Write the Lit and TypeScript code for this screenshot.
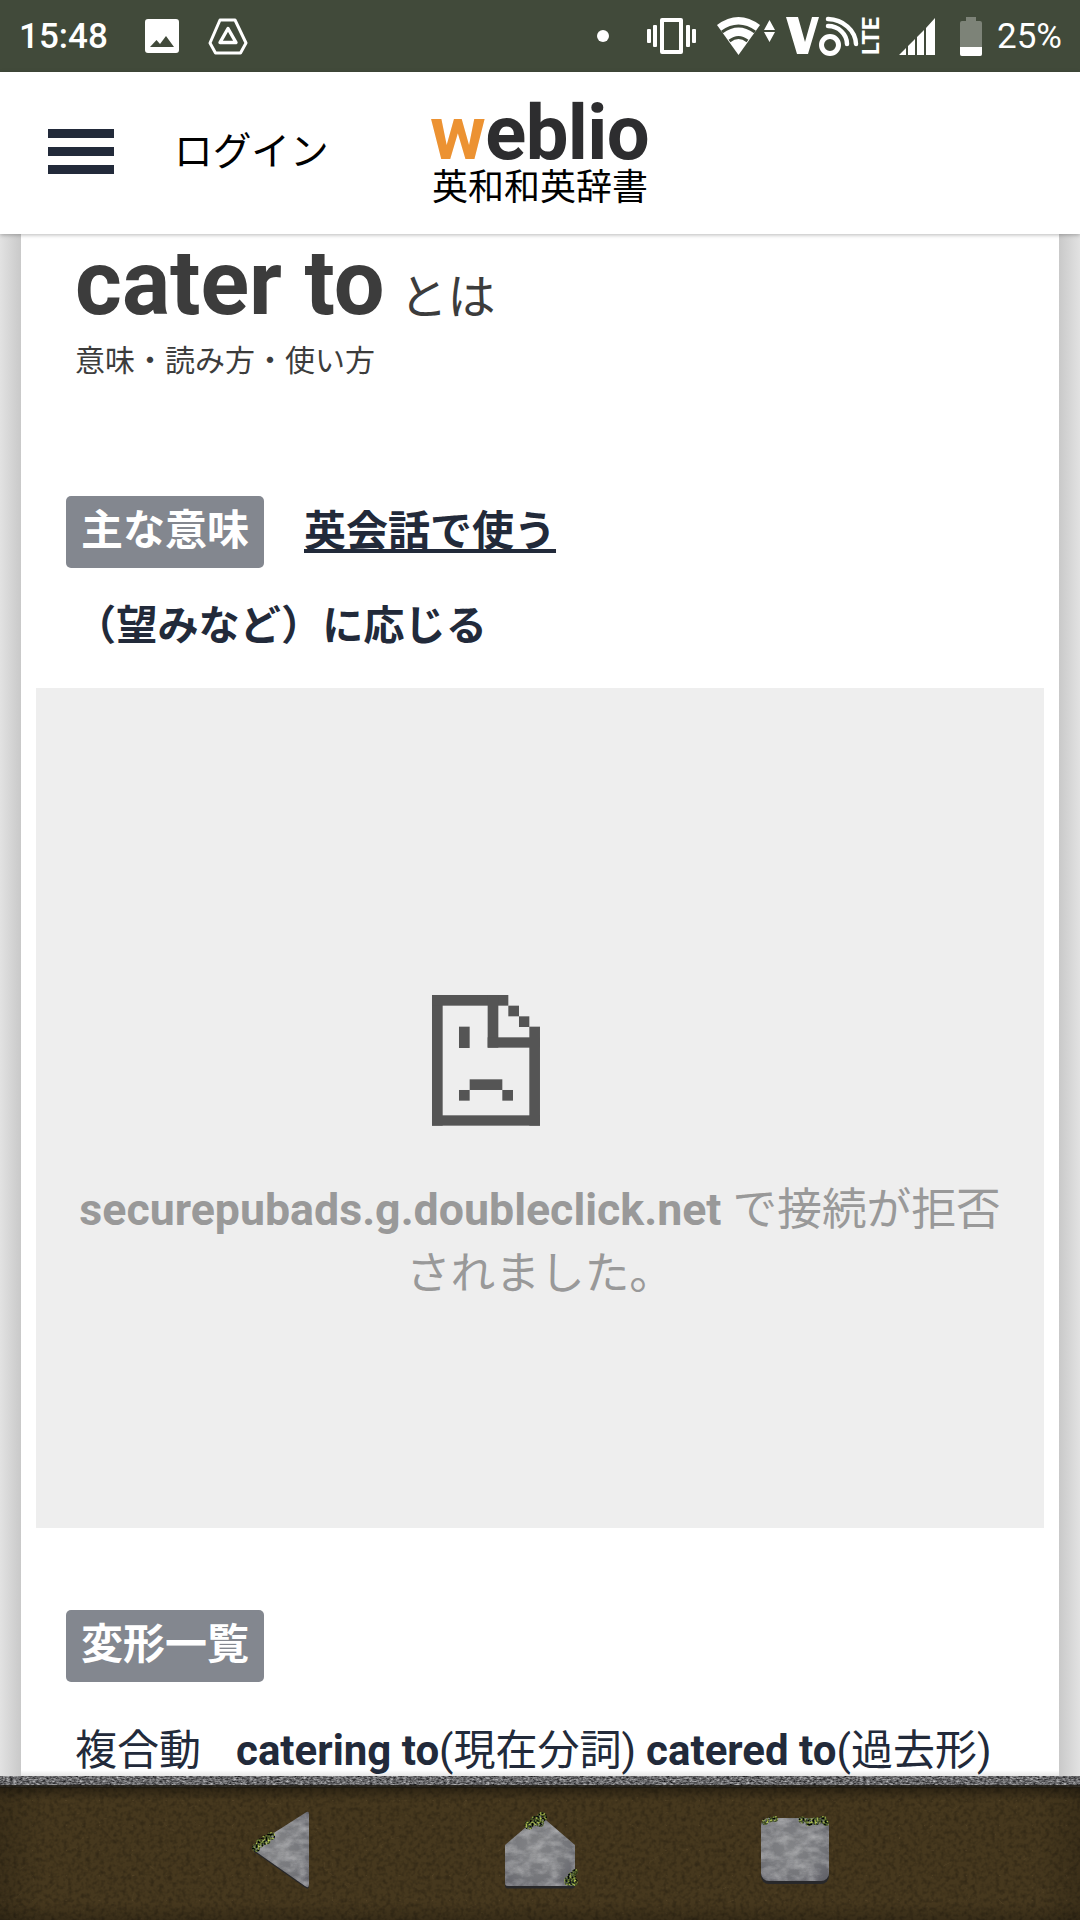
import { LitElement, html, css, svg } from "lit";
import { customElement } from "lit/decorators.js";

const moss = (pts: [number, number, number][]) =>
  pts.map(([x, y, r]) => svg`<circle cx=${x} cy=${y} r=${r} fill="#000" filter="url(#mossN)"/>`);

@customElement("app-root")
export class AppRoot extends LitElement {
  static styles = css`
    :host {
      display: flex;
      flex-direction: column;
      width: 1080px;
      height: 1920px;
      overflow: hidden;
      background: #fff;
      font-family: Roboto, "Noto Sans CJK JP", sans-serif;
    }
    .status {
      flex: 0 0 72px;
      background: #414a3a;
      display: flex;
      align-items: center;
      color: #fff;
      padding: 0 18px 0 19px;
    }
    .status svg { display: block; flex: none; }
    .time { font-size: 35px; font-weight: 500; width: 126px; line-height: 1; }
    .gap-drive { margin-left: 29px; }
    .spacer { flex: 1; }
    .m-vib { margin-left: 38px; }
    .m-wifi { margin-left: 21px; }
    .m-vo { margin-left: 11px; }
    .m-sig { margin-left: 14px; }
    .m-bat { margin-left: 25px; }
    .pct { font-size: 35px; margin-left: 15px; line-height: 1; }

    .header {
      flex: 0 0 162px;
      background: #fff;
      display: flex;
      align-items: center;
      padding-left: 48px;
      position: relative;
      z-index: 2;
      box-shadow: 0 1px 4px rgba(0, 0, 0, 0.28);
    }
    .burger { width: 66px; display: flex; flex-direction: column; gap: 9px; margin-top: -4px; }
    .burger i { display: block; height: 9px; background: #222a3a; }
    .login {
      margin-left: 60px;
      width: 256px;
      font-size: 38.7px;
      color: #000;
      line-height: 1;
      font-family: "Noto Sans CJK JP", sans-serif;
      font-weight: 400;
      margin-top: -10px;
      white-space: nowrap;
    }
    .logo { display: flex; flex-direction: column; width: 216px; }
    .logo-word {
      font-weight: 700;
      font-size: 76px;
      line-height: 62px;
      letter-spacing: -0.6px;
      color: #2d2d2f;
      white-space: nowrap;
    }
    .logo-word b { color: #ec9232; font-weight: 700; }
    .logo-sub {
      font-family: "Noto Sans CJK JP", sans-serif;
      font-size: 36px;
      line-height: 40px;
      color: #000;
      white-space: nowrap;
      margin-left: 2px;
    }

    .main {
      flex: 1;
      min-height: 0;
      display: flex;
      position: relative;
      background: #fff;
    }
    .side { flex: 0 0 21px; }
    .side.l { background: linear-gradient(to right, #e2e2e2, #c9c9c9); }
    .side.r { background: linear-gradient(to left, #e2e2e2, #c9c9c9); }
    .page { flex: 1; min-width: 0; padding: 0 15px; color: #222a3a; }
    .title { margin: 8px 0 0 39px; color: #3c3c3c; display: flex; align-items: baseline; height: 84px; white-space: nowrap; }
    .title strong { font-size: 90px; font-weight: 700; line-height: 84px; }
    .title span { font-size: 48px; margin-left: 15px; line-height: 84px; font-family: "Noto Sans CJK JP", sans-serif; }
    .sub {
      margin: 0 0 0 39px;
      font-size: 30px;
      line-height: 44px;
      color: #3c3c3c;
      font-family: "Noto Sans CJK JP", sans-serif;
      padding-top: 10px;
    }
    .tabs { display: flex; align-items: center; margin: 116px 0 0 30px; gap: 40px; }
    .badge {
      background: #83878f;
      color: #fff;
      font-weight: 700;
      font-size: 42px;
      height: 72px;
      width: 198px;
      box-sizing: border-box;
      padding-bottom: 12px;
      border-radius: 5px;
      display: flex;
      align-items: center;
      justify-content: center;
      white-space: nowrap;
      font-family: "Noto Sans CJK JP", sans-serif;
    }
    .link {
      font-size: 42px;
      font-weight: 700;
      text-decoration: underline;
      font-family: "Noto Sans CJK JP", sans-serif;
      line-height: 62px;
      padding-bottom: 8px;
    }
    .meaning {
      margin: 24px 0 0 39px;
      font-size: 41.2px;
      line-height: 60px;
      font-weight: 700;
      font-family: "Noto Sans CJK JP", sans-serif;
    }
    .frame {
      margin-top: 36px;
      height: 840px;
      width: 1008px;
      background: #eee;
      display: flex;
      flex-direction: column;
      align-items: center;
      box-sizing: border-box;
      padding-top: 282px;
    }
    .frame svg { width: 180px; height: 170px; display: block; margin-left: -100px; }
    .err {
      margin: 38px 0 0;
      width: 940px;
      text-align: center;
      font-size: 44.7px;
      line-height: 64px;
      color: #999;
    }
    .err b { font-weight: 700; }
    .badge2 { margin: 82px 0 0 30px; }
    .forms {
      margin: 39px 0 0 39px;
      font-size: 42px;
      line-height: 60px;
      white-space: nowrap;
      display: flex;
    }
    .forms .kind { margin-right: 35px; }
    .forms b { font-weight: 700; }
    .forms .next { margin-left: 10px; }
    .fade {
      position: absolute;
      left: 21px;
      right: 21px;
      bottom: 0;
      height: 6px;
      background: linear-gradient(to bottom, rgba(0, 0, 0, 0), rgba(0, 0, 0, 0.1));
    }

    .nav {
      flex: 0 0 144px;
      position: relative;
      z-index: 2;
      display: flex;
      align-items: flex-start;
      background: #46381e;
      padding-left: 250px;
    }
    .tex { position: absolute; inset: 0; width: 1080px; height: 144px; display: block; }
    .nav .btn { position: relative; display: block; flex: none; margin-top: 32px; }
    .nav .b-home { margin-left: 188px; margin-top: 34px; }
    .nav .b-square { margin-left: 181px; margin-top: 40px; }
  `;

  private stoneDefs() {
    return svg`
      <defs>
        <filter id="stoneN" x="-5%" y="-5%" width="110%" height="110%" color-interpolation-filters="sRGB">
          <feTurbulence type="fractalNoise" baseFrequency="0.07 0.11" numOctaves="5" seed="8" result="n"/>
          <feColorMatrix in="n" type="matrix" values="0 0 0 0 1  0 0 0 0 1  0 0 0 0 1  .7 0 0 0 -.24" result="a"/>
          <feComposite in="a" in2="SourceAlpha" operator="in" result="spots"/>
          <feMerge><feMergeNode in="SourceGraphic"/><feMergeNode in="spots"/></feMerge>
        </filter>
        <filter id="mossN" x="-30%" y="-30%" width="160%" height="160%" color-interpolation-filters="sRGB">
          <feTurbulence type="fractalNoise" baseFrequency="0.5" numOctaves="2" seed="3" result="n"/>
          <feColorMatrix in="n" type="matrix" values="1.900 0 0 0 -.68  1.900 0 0 0 -.62  .8 0 0 0 -.26  0 0 0 3 -.6" result="c"/>
          <feComposite in="c" in2="SourceAlpha" operator="in"/>
        </filter>
        <radialGradient id="stone" cx=".45" cy=".45" r=".75">
          <stop offset="0" stop-color="#838487"/>
          <stop offset="0.6" stop-color="#75767a"/>
          <stop offset="1" stop-color="#5f5f67"/>
        </radialGradient>
      </defs>`;
  }

  render() {
    return html`
      <section class="status">
        <span class="time">15:48</span>
        <svg width="34" height="34" viewBox="0 0 34 34">
          <path fill-rule="evenodd" fill="#fff" d="M3 0h28a3 3 0 0 1 3 3v28a3 3 0 0 1-3 3H3a3 3 0 0 1-3-3V3a3 3 0 0 1 3-3zM5 28h24l-8-11-6 8-3.500-4z"/>
        </svg>
        <svg class="gap-drive" width="40" height="37" viewBox="0 0 40 37" fill="none" stroke="#fff">
          <path stroke-width="3" stroke-linejoin="round" d="M12 2h15l11 23-5.500 10h-25L2 25z"/>
          <path stroke-width="3.400" stroke-linejoin="round" d="M20 10.500l8 14H12z"/>
        </svg>
        <span class="spacer"></span>
        <svg width="12" height="12" viewBox="0 0 12 12"><circle cx="6" cy="6" r="6" fill="#fff"/></svg>
        <svg class="m-vib" width="49" height="36" viewBox="0 0 49 36" fill="#fff">
          <path fill-rule="evenodd" d="M15 0h19a2 2 0 0 1 2 2v32a2 2 0 0 1-2 2H15a2 2 0 0 1-2-2V2a2 2 0 0 1 2-2zM17 4v28h15V4z"/>
          <rect x="0" y="11" width="4" height="14" rx="1"/><rect x="6" y="7" width="4" height="22" rx="1"/>
          <rect x="39" y="7" width="4" height="22" rx="1"/><rect x="45" y="11" width="4" height="14" rx="1"/>
        </svg>
        <svg class="m-wifi" width="58" height="40" viewBox="0 0 58 40" fill="#fff">
          <path d="M21.500 39L0 9Q21.500-7 43 9z"/>
          <path d="M5 16Q21.500 4 38 16M12.500 25Q21.500 18 30.500 25" fill="none" stroke="#414a3a" stroke-width="3"/>
          <path d="M52.500 4L58 14H47zM52.500 26L58 16H47z"/>
        </svg>
        <svg class="m-vo" width="99" height="40" viewBox="0 0 99 40" fill="#fff">
          <path d="M0 1h12l7 25 7-25h7L22 38H11z"/>
          <circle cx="44" cy="29" r="8.500" fill="none" stroke="#fff" stroke-width="5"/>
          <path d="M42 10A19 18 0 0 1 61 28M42 3A29 26 0 0 1 70 28" fill="none" stroke="#fff" stroke-width="4.500" stroke-linecap="round"/>
          <text transform="translate(93 39) rotate(-90)" font-family="Roboto, sans-serif" font-size="24" font-weight="700" textLength="38" lengthAdjust="spacingAndGlyphs" fill="#fff">LTE</text>
        </svg>
        <svg class="m-sig" width="36" height="37" viewBox="0 0 36 37" fill="#fff">
          <path d="M0 37L7 30V37zM9 28L16 21V37H9zM18 19L25 12V37H18zM27 10L36 0V37H27z"/>
        </svg>
        <svg class="m-bat" width="22" height="39" viewBox="0 0 22 39">
          <path fill="#7d8378" d="M6 0h10v4h4a2 2 0 0 1 2 2v31a2 2 0 0 1-2 2H2a2 2 0 0 1-2-2V6a2 2 0 0 1 2-2h4z"/>
          <path fill="#fff" d="M0 30h22v7a2 2 0 0 1-2 2H2a2 2 0 0 1-2-2z"/>
        </svg>
        <span class="pct">25%</span>
      </section>

      <header class="header">
        <div class="burger"><i></i><i></i><i></i></div>
        <div class="login">ログイン</div>
        <div class="logo">
          <div class="logo-word"><b>w</b>eblio</div>
          <div class="logo-sub">英和和英辞書</div>
        </div>
      </header>

      <main class="main">
        <div class="side l"></div>
        <div class="page">
          <div class="title"><strong>cater to</strong><span>とは</span></div>
          <p class="sub">意味・読み方・使い方</p>
          <div class="tabs">
            <div class="badge">主な意味</div>
            <div class="link">英会話で使う</div>
          </div>
          <div class="meaning">（望みなど）に応じる</div>
          <div class="frame">
            <svg viewBox="0 0 180 170" fill="#555">
              <g transform="scale(0.3333)">
                <rect x="96" y="75" width="32" height="392"/>
                <rect x="96" y="75" width="229" height="32"/>
                <rect x="263" y="75" width="32" height="158"/>
                <rect x="263" y="202" width="157" height="31"/>
                <rect x="388" y="170" width="32" height="297"/>
                <rect x="96" y="436" width="324" height="31"/>
                <rect x="325" y="107" width="32" height="32"/>
                <rect x="357" y="139" width="31" height="32"/>
                <rect x="177" y="170" width="32" height="64"/>
                <rect x="209" y="328" width="98" height="32"/>
                <rect x="177" y="360" width="32" height="32"/>
                <rect x="307" y="360" width="32" height="32"/>
              </g>
            </svg>
            <p class="err"><b>securepubads.g.doubleclick.net</b> で接続が拒否されました。</p>
          </div>
          <div class="badge badge2">変形一覧</div>
          <div class="forms"><span class="kind">複合動</span><b>catering to</b><span>(現在分詞)</span><b class="next">catered to</b><span>(過去形)</span></div>
        </div>
        <div class="side r"></div>
        <div class="fade"></div>
      </main>

      <nav class="nav">
        <svg class="tex" viewBox="0 0 1080 144">
          <defs>
            <filter id="leather" x="0" y="0" width="100%" height="100%" color-interpolation-filters="sRGB">
              <feTurbulence type="turbulence" baseFrequency="0.03 0.04" numOctaves="4" seed="11"/>
              <feColorMatrix type="matrix" values="0 0 0 0 .62  0 0 0 0 .52  0 0 0 0 .35  -6 0 0 0 .5"/>
            </filter>
            <filter id="grain" x="0" y="0" width="100%" height="100%" color-interpolation-filters="sRGB">
              <feTurbulence type="fractalNoise" baseFrequency="0.22" numOctaves="2" seed="4"/>
              <feColorMatrix type="matrix" values="0 0 0 0 0  0 0 0 0 0  0 0 0 0 0  2.400 0 0 0 -1"/>
            </filter>
            <filter id="rock" x="0" y="0" width="100%" height="100%" color-interpolation-filters="sRGB">
              <feTurbulence type="fractalNoise" baseFrequency="0.3 0.6" numOctaves="3" seed="6"/>
              <feColorMatrix type="matrix" values=".9 0 0 0 -.04  .9 0 0 0 -.04  .9 0 0 0 -.03  0 0 0 0 1"/>
            </filter>
            <linearGradient id="vig" x1="0" y1="0" x2="0" y2="1">
              <stop offset="0.07" stop-color="#000" stop-opacity=".4"/>
              <stop offset=".17" stop-color="#000" stop-opacity="0"/>
              <stop offset=".88" stop-color="#000" stop-opacity="0"/>
              <stop offset="1" stop-color="#000" stop-opacity=".2"/>
            </linearGradient>
            <linearGradient id="vigH" x1="0" y1="0" x2="1" y2="0">
              <stop offset="0" stop-color="#000" stop-opacity=".15"/>
              <stop offset=".04" stop-color="#000" stop-opacity="0"/>
              <stop offset=".96" stop-color="#000" stop-opacity="0"/>
              <stop offset="1" stop-color="#000" stop-opacity=".15"/>
            </linearGradient>
          </defs>
          <rect width="1080" height="144" fill="#46381e"/>
          <rect width="1080" height="144" filter="url(#leather)" opacity=".28"/>
          <rect width="1080" height="144" filter="url(#grain)" opacity=".25"/>
          <rect width="1080" height="144" fill="url(#vig)"/>
          <rect width="1080" height="144" fill="url(#vigH)"/>
          <rect width="1080" height="11" filter="url(#rock)"/>
          <rect y="9" width="1080" height="3" fill="#1f1a10" opacity=".85"/>
        </svg>

        <svg class="btn" width="64" height="84" viewBox="0 0 64 84">
          ${this.stoneDefs()}
          <path d="M59 6Q59 2 55 5L5 37Q1 40 5 43L55 78Q59 81 59 76z" fill="#28282a" transform="translate(0 1.500)"/>
          <path d="M59 6Q59 2 55 5L5 37Q1 40 5 43L55 78Q59 81 59 76z" fill="url(#stone)" filter="url(#stoneN)"/>
          ${moss([[6, 40, 4], [10, 35, 4.500], [16, 32, 5], [21, 28, 4]])}
        </svg>
        <svg class="btn b-home" width="76" height="80" viewBox="0 0 76 80">
          <path d="M38 5L73 35V74Q73 77 70 77H6Q3 77 3 74V35z" fill="#28282a" transform="translate(0 1.500)"/>
          <path d="M38 5L73 35V73Q73 76 70 76H6Q3 76 3 73V35z" fill="url(#stone)" filter="url(#stoneN)"/>
          ${moss([[27, 15, 4.500], [33, 11, 5], [40, 7, 5], [38, 13, 4], [70, 66, 4], [67, 71, 5], [73, 62, 3], [72, 72, 4]])}
        </svg>
        <svg class="btn b-square" width="72" height="70" viewBox="0 0 72 70">
          <rect x="2" y="3" width="68" height="65" rx="8" fill="#28282a"/>
          <rect x="2" y="2" width="68" height="63" rx="8" fill="url(#stone)" filter="url(#stoneN)"/>
          ${moss([[6, 6, 3], [11, 4, 3], [16, 3, 3], [43, 4, 3.500], [50, 6, 4], [57, 5, 4], [64, 4, 4], [67, 7, 3]])}
        </svg>
      </nav>
    `;
  }
}
